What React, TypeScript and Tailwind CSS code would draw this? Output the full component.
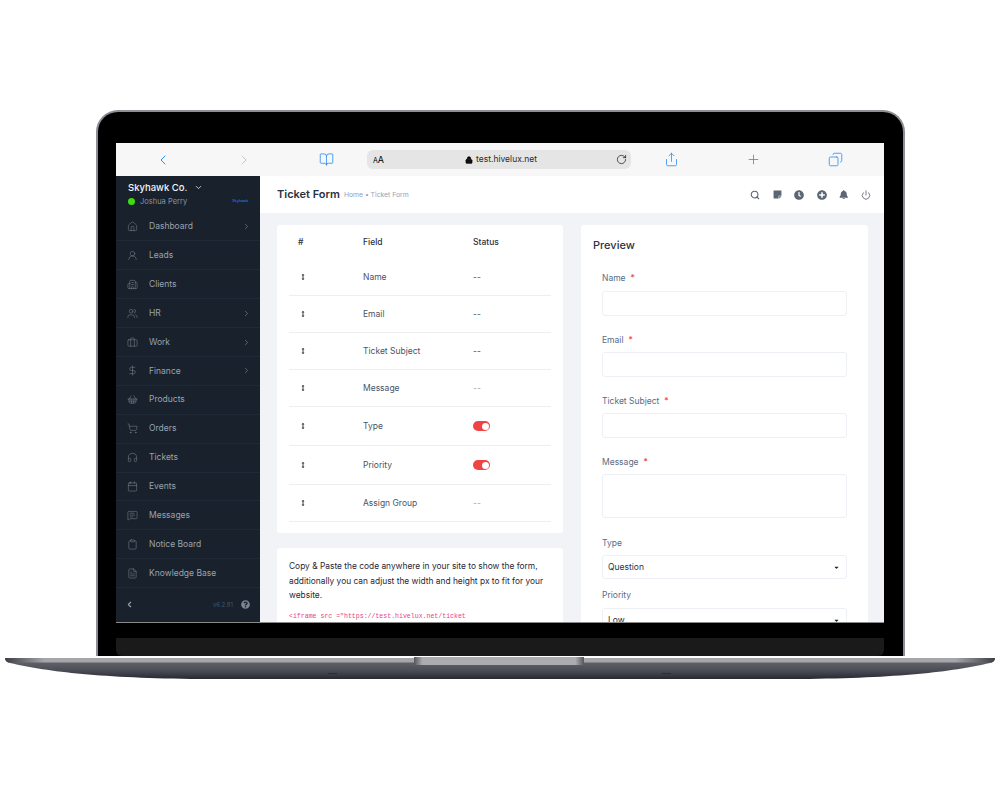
import React from "react";
import {
  ChevronLeft, ChevronRight, ChevronDown, BookOpen, Lock, RotateCw, Share, Plus, Copy, Search, Power,
  Home, UserRound, Building2, Users, Briefcase, DollarSign, ShoppingBasket, ShoppingCart, Headphones,
  Calendar, MessageSquareText, Clipboard, FileText,
} from "lucide-react";
import { FaArrowsAltV, FaBell, FaClock, FaPlusCircle, FaQuestionCircle, FaStickyNote, FaCaretDown } from "react-icons/fa";

const menu: [string, React.ComponentType<any>, boolean][] = [
  ["Dashboard", Home, true],
  ["Leads", UserRound, false],
  ["Clients", Building2, false],
  ["HR", Users, true],
  ["Work", Briefcase, true],
  ["Finance", DollarSign, true],
  ["Products", ShoppingBasket, false],
  ["Orders", ShoppingCart, false],
  ["Tickets", Headphones, false],
  ["Events", Calendar, false],
  ["Messages", MessageSquareText, false],
  ["Notice Board", Clipboard, false],
  ["Knowledge Base", FileText, false],
];

const rows: [string, string, string][] = [
  ["Name", "--", "h-[37px]"],
  ["Email", "--", "h-[37px]"],
  ["Ticket Subject", "--", "h-[37px]"],
  ["Message", "--", "h-[37px]"],
  ["Type", "on", "h-[39px]"],
  ["Priority", "on", "h-[39px]"],
  ["Assign Group", "--", "h-[37px]"],
];

function Label({ text, req, className }: { text: string; req?: boolean; className: string }) {
  return (
    <div className={`text-[8.5px] leading-[12px] text-[#5a6b85] ${className}`}>
      {text}
      {req && <span className="ml-[5px] text-[#ef4444]">*</span>}
    </div>
  );
}

function Field({ className }: { className: string }) {
  return <div className={`w-[245px] rounded-[3px] border border-[#edf0f4] bg-white ${className}`} />;
}

function Select({ value, className }: { value: string; className: string }) {
  return (
    <div className={`flex w-[245px] shrink-0 items-center justify-between rounded-[3px] border border-[#edf0f4] bg-white pl-[5px] pr-[6px] text-[8.5px] text-[#2a3342] ${className}`}>
      <span>{value}</span>
      <FaCaretDown size={7} color="#222" />
    </div>
  );
}

function Base() {
  return (
    <svg width="1000" height="24" viewBox="0 0 1000 24" className="block shrink-0">
      <defs>
        <linearGradient id="lower" x1="0" y1="0" x2="0" y2="1">
          <stop offset="0" stopColor="#6a6b72" />
          <stop offset="0.6" stopColor="#4b4c55" />
          <stop offset="1" stopColor="#272832" />
        </linearGradient>
        <linearGradient id="top" x1="0" y1="0" x2="1" y2="0">
          <stop offset="0" stopColor="#3d3e44" />
          <stop offset="0.04" stopColor="#a5a5aa" />
          <stop offset="0.96" stopColor="#a5a5aa" />
          <stop offset="1" stopColor="#3d3e44" />
        </linearGradient>
        <linearGradient id="notch" x1="0" y1="0" x2="1" y2="0">
          <stop offset="0" stopColor="#55555a" />
          <stop offset="0.05" stopColor="#acacb0" />
          <stop offset="0.95" stopColor="#acacb0" />
          <stop offset="1" stopColor="#55555a" />
        </linearGradient>
      </defs>
      <path d="M5 2 L995 2 C995 5 993 6 990 7 C950 16 900 22 800 23 L200 23 C100 22 50 16 10 7 C7 6 5 5 5 2 Z" fill="url(#lower)" />
      <path d="M5 2 L995 2 C995 4 994 5 992 6.500 L8 6.500 C6 5 5 4 5 2 Z" fill="url(#top)" />
      <path d="M414 1 L584 1 L584 9 L414 9 Z" fill="url(#notch)" />
      <path d="M328 17.500 H337 M662 17.500 H671" stroke="#2c2d34" strokeWidth="1" />
    </svg>
  );
}

export default function App() {
  return (
    <div className="flex h-[788px] w-[1000px] flex-col items-center overflow-hidden bg-white pt-[110px] font-['Inter',sans-serif]">
      {/* Bezel */}
      <div className="flex h-[546px] w-[809px] shrink-0 flex-col items-center overflow-hidden rounded-t-[22px] border-x-2 border-t-2 border-[#8d8e94] bg-black pt-[31px]">
        <div className="relative flex h-[480px] w-[768px] shrink-0 flex-col overflow-hidden border-b border-[#8a8a8a] bg-[#f1f3f7]">
          {/* Browser bar */}
          <div className="flex h-[33px] shrink-0 items-center bg-[#f7f7f7] text-[#2d8cf0]">
            <div className="flex w-[252px] items-center">
              <ChevronLeft size={16} strokeWidth={1.5} className="ml-[39px]" />
              <ChevronRight size={16} strokeWidth={1.5} className="ml-[65px] text-[#c9c9c9]" />
            </div>
            <BookOpen size={15} strokeWidth={1.3} className="ml-[-49px] w-[15px]" />
            <div className="ml-[33px] flex h-[19px] w-[264px] items-center rounded-[6px] bg-[#e5e5e5] pl-[6px] pr-[4px] text-black">
              <span className="text-[9px]"><span className="text-[7px]">A</span>A</span>
              <div className="flex flex-1 items-center justify-center gap-[3px] pl-[2px]">
                <Lock size={8} fill="#111" strokeWidth={2} />
                <span className="text-[8.5px] text-[#2c2c2c]">test.hivelux.net</span>
              </div>
              <RotateCw size={11} strokeWidth={1.4} />
            </div>
            <Share size={15} strokeWidth={1.3} className="ml-[33px]" />
            <Plus size={15} strokeWidth={1.3} className="ml-[67px]" />
            <Copy size={15} strokeWidth={1.3} className="ml-[67px] scale-x-[-1]" />
          </div>

          <div className="flex min-h-0 flex-1">
            {/* Sidebar */}
            <aside className="flex w-[144px] shrink-0 flex-col bg-[#18212c]">
              <div className="flex h-[36.500px] shrink-0 flex-col justify-center pl-[12px] pr-[12px]">
                <div className="flex items-center gap-[7px] text-[9.500px] font-medium leading-[12px] text-[#f3f4f6]">
                  Skyhawk Co.
                  <ChevronDown size={9} strokeWidth={2} />
                </div>
                <div className="mt-[3px] flex items-center justify-between">
                  <div className="flex items-center gap-[5px] text-[7.500px] leading-[10px] text-[#8993a1]">
                    <span className="h-[7px] w-[7px] rounded-full bg-[#3ddc0f]" />
                    Joshua Perry
                  </div>
                  <span className="text-[3.500px] font-bold text-[#2563c9]">Skyhawk</span>
                </div>
              </div>
              {menu.map(([name, Icon, arrow]) => (
                <div key={name} className="flex h-[28.900px] shrink-0 items-center border-b border-[#1f2a36] pl-[11px] pr-[9px] text-[8.500px] text-[#9aa3af]">
                  <Icon size={11} strokeWidth={1} className="mr-[11px] text-[#8c95a1]" />
                  <span className="flex-1">{name}</span>
                  {arrow && <ChevronRight size={9} strokeWidth={1.3} />}
                </div>
              ))}
              <div className="flex flex-1 items-center justify-between pb-[2px] pl-[9px] pr-[10px]">
                <ChevronLeft size={9} strokeWidth={3} className="text-[#9aa3af]" />
                <div className="flex items-center gap-[8px]">
                  <span className="text-[6px] text-[#43566e]">v6.2.81</span>
                  <FaQuestionCircle size={9} color="#7d8794" />
                </div>
              </div>
            </aside>

            {/* Main */}
            <main className="flex min-w-0 flex-1 flex-col overflow-hidden">
              <header className="flex h-[37px] shrink-0 items-center bg-white pl-[17px] pr-[13px]">
                <span className="text-[11px] font-semibold text-[#2a3342]">Ticket Form</span>
                <span className="ml-[4px] mt-[1px] text-[6.800px] text-[#93a1b5]">Home • Ticket Form</span>
                <div className="ml-auto flex items-center gap-[12.500px] text-[#5c6675]">
                  <Search size={10} strokeWidth={2.6} />
                  <FaStickyNote size={9} />
                  <FaClock size={10} />
                  <FaPlusCircle size={10} />
                  <FaBell size={9.500} />
                  <Power size={10} strokeWidth={2} />
                </div>
              </header>

              <div className="flex gap-[18px] pl-[17px] pt-[12px]">
                {/* Left */}
                <div className="flex w-[286px] shrink-0 flex-col gap-[15px]">
                  <div className="flex h-[308px] flex-col rounded-[3px] bg-white px-[12px]">
                    <div className="flex h-[34px] shrink-0 items-center text-[8.500px] font-medium text-[#2a3342]">
                      <span className="w-[74px] pl-[9px]">#</span>
                      <span className="w-[110px]">Field</span>
                      <span>Status</span>
                    </div>
                    {rows.map(([name, status, h]) => (
                      <div key={name} className={`flex shrink-0 items-center border-b border-[#eceef1] text-[8.500px] text-[#4a5464] ${h}`}>
                        <span className="w-[74px] pl-[11px] text-[#333b47]"><FaArrowsAltV size={6} /></span>
                        <span className="w-[110px]">{name}</span>
                        {status === "on" ? (
                          <span className="flex h-[10px] w-[17px] items-center justify-end rounded-full bg-[#ef4444] pr-[1.500px]">
                            <span className="h-[7px] w-[7px] rounded-full bg-white" />
                          </span>
                        ) : (
                          <span className={name === "Message" || name === "Assign Group" ? "text-[#a3a9b2]" : ""}>--</span>
                        )}
                      </div>
                    ))}
                  </div>
                  <div className="h-[120px] rounded-[3px] bg-white px-[12px] pt-[11px]">
                    <p className="text-[8.400px] leading-[14.700px] text-[#1f2937]">
                      Copy &amp; Paste the code anywhere in your site to show the form, additionally you can adjust the width and height px to fit for your website.
                    </p>
                    <code className="mt-[9px] block whitespace-nowrap font-['Liberation_Mono',monospace] text-[6.550px] text-[#e83e8c]">
                      &lt;iframe src ="https://test.hivelux.net/ticket
                    </code>
                  </div>
                </div>

                {/* Preview */}
                <div className="flex h-[420px] w-[287px] shrink-0 flex-col rounded-[3px] bg-white pl-[21px]">
                  <div className="-ml-[9px] mt-[13px] text-[11px] font-medium leading-[14px] text-[#2a3342]">Preview</div>
                  <Label text="Name" req className="mt-[20px]" />
                  <Field className="mt-[7px] h-[25px] shrink-0" />
                  <Label text="Email" req className="mt-[18px]" />
                  <Field className="mt-[6px] h-[25px] shrink-0" />
                  <Label text="Ticket Subject" req className="mt-[18px]" />
                  <Field className="mt-[6px] h-[25px] shrink-0" />
                  <Label text="Message" req className="mt-[18px]" />
                  <Field className="mt-[6px] h-[44px] shrink-0" />
                  <Label text="Type" className="mt-[19px]" />
                  <Select value="Question" className="mt-[6px] h-[24px]" />
                  <Label text="Priority" className="mt-[10px]" />
                  <Select value="Low" className="mt-[7px] h-[24px]" />
                </div>
              </div>
            </main>
          </div>
        </div>
        <div className="mt-[15px] h-[18px] w-[768px] shrink-0 rounded-b-[6px] bg-[#1a1a1a]" />
      </div>
      <Base />
    </div>
  );
}
